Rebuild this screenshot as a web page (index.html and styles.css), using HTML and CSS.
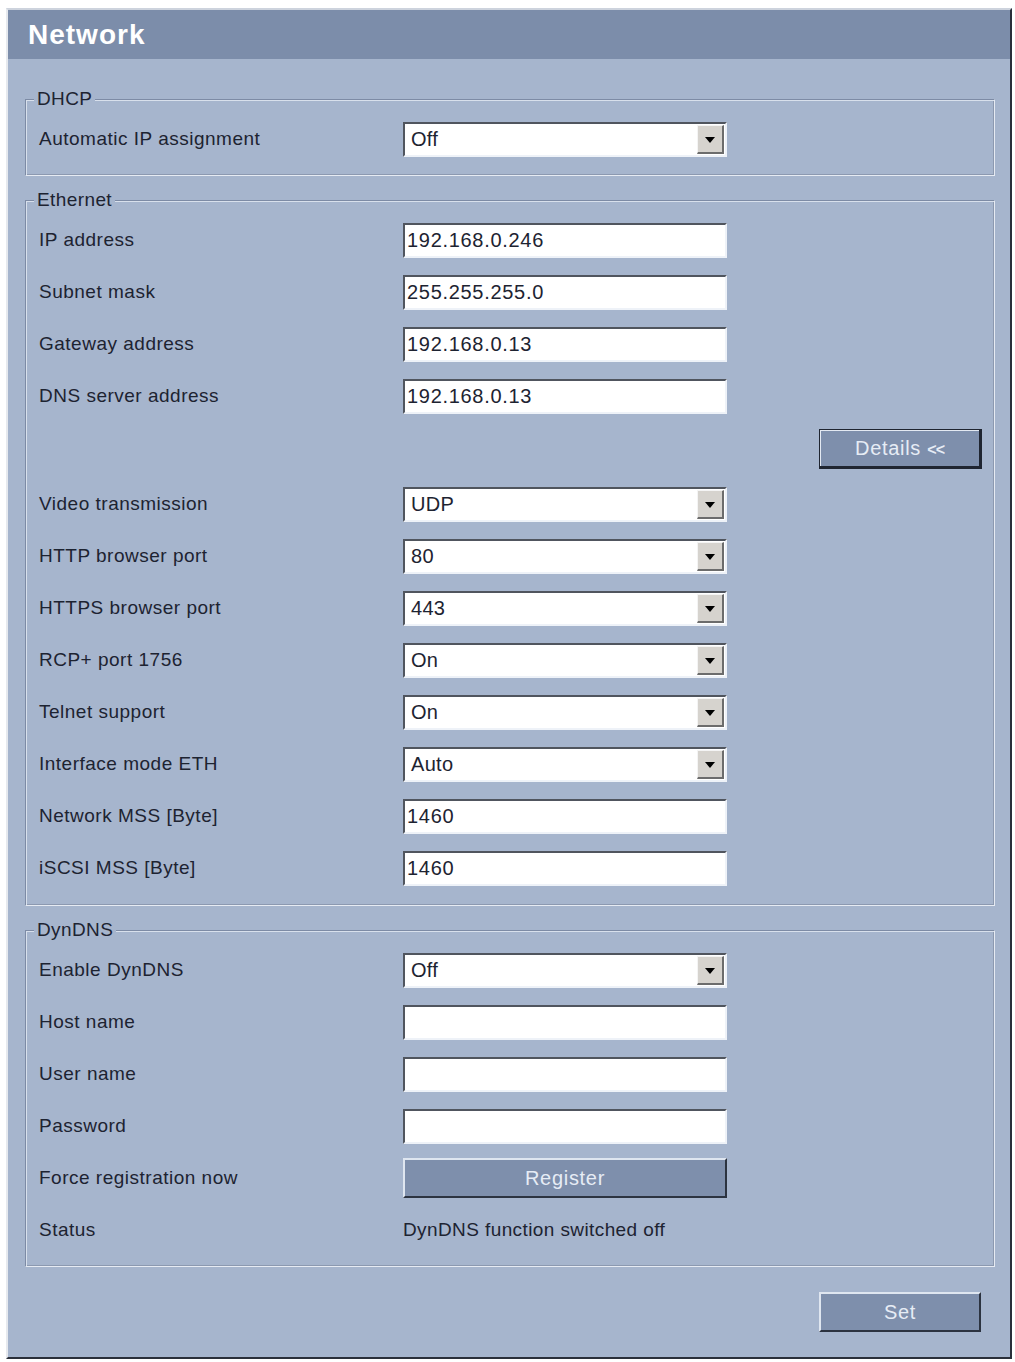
FILE: index.html
```html
<!DOCTYPE html>
<html>
<head>
<meta charset="utf-8">
<title>Network</title>
<link rel="stylesheet" href="styles.css">
</head>
<body>
<div class="panel">
  <div class="header">Network</div>
  <div class="content">
    <fieldset class="group group-dhcp">
      <legend>DHCP</legend>
      <div class="row">
        <span class="label">Automatic IP assignment</span>
        <div class="select"><span class="val">Off</span><span class="arrow"><span class="tri"></span></span></div>
      </div>
    </fieldset>

    <fieldset class="group group-eth">
      <legend>Ethernet</legend>
      <div class="row"><span class="label">IP address</span><input class="field" type="text" value="192.168.0.246"></div>
      <div class="row"><span class="label">Subnet mask</span><input class="field" type="text" value="255.255.255.0"></div>
      <div class="row"><span class="label">Gateway address</span><input class="field" type="text" value="192.168.0.13"></div>
      <div class="row"><span class="label">DNS server address</span><input class="field" type="text" value="192.168.0.13"></div>
      <div class="details-row"><button class="btn btn-details">Details <span class="chev">&lt;&lt;</span></button></div>
      <div class="row"><span class="label">Video transmission</span><div class="select"><span class="val">UDP</span><span class="arrow"><span class="tri"></span></span></div></div>
      <div class="row"><span class="label">HTTP browser port</span><div class="select"><span class="val">80</span><span class="arrow"><span class="tri"></span></span></div></div>
      <div class="row"><span class="label">HTTPS browser port</span><div class="select"><span class="val">443</span><span class="arrow"><span class="tri"></span></span></div></div>
      <div class="row"><span class="label">RCP+ port 1756</span><div class="select"><span class="val">On</span><span class="arrow"><span class="tri"></span></span></div></div>
      <div class="row"><span class="label">Telnet support</span><div class="select"><span class="val">On</span><span class="arrow"><span class="tri"></span></span></div></div>
      <div class="row"><span class="label">Interface mode ETH</span><div class="select"><span class="val">Auto</span><span class="arrow"><span class="tri"></span></span></div></div>
      <div class="row"><span class="label">Network MSS [Byte]</span><input class="field" type="text" value="1460"></div>
      <div class="row"><span class="label">iSCSI MSS [Byte]</span><input class="field" type="text" value="1460"></div>
    </fieldset>

    <fieldset class="group group-dyn">
      <legend>DynDNS</legend>
      <div class="row"><span class="label">Enable DynDNS</span><div class="select"><span class="val">Off</span><span class="arrow"><span class="tri"></span></span></div></div>
      <div class="row"><span class="label">Host name</span><input class="field" type="text" value=""></div>
      <div class="row"><span class="label">User name</span><input class="field" type="text" value=""></div>
      <div class="row"><span class="label">Password</span><input class="field" type="password" value=""></div>
      <div class="row"><span class="label">Force registration now</span><button class="btn btn-register">Register</button></div>
      <div class="row"><span class="label">Status</span><span class="status">DynDNS function switched off</span></div>
    </fieldset>

    <div class="set-row"><button class="btn btn-set">Set</button></div>
  </div>
</div>
</body>
</html>
```

FILE: styles.css
```css
html, body {
  margin: 0;
  padding: 0;
  background: #ffffff;
}

body {
  font-family: "Liberation Sans", Arial, sans-serif;
  color: #1d2331;
}

.panel {
  box-sizing: border-box;
  width: 1006px;
  margin: 8px 0 0 6px;
  background: #a6b5cd;
  border-top: 2px solid #cdd3dd;
  border-left: 2px solid #e6e9ee;
  border-right: 2px solid #2a2f3a;
  border-bottom: 2px solid #2a2f3a;
}

.header {
  height: 49px;
  background: #7c8daa;
  color: #ffffff;
  font-weight: bold;
  font-size: 28px;
  letter-spacing: 1px;
  line-height: 49px;
  padding-left: 20px;
}

.content {
  padding: 29px 15px 25px 17px;
}

.group {
  margin: 0;
  padding: 3px 12px 10px 13px;
  border-top: 1px solid #7d8ba5;
  border-left: 1px solid #7d8ba5;
  border-right: 1px solid #e6ebf3;
  border-bottom: 1px solid #e6ebf3;
  box-shadow: inset 1px 1px 0 #d8e0ec, inset -1px -1px 0 #8c99b0;
}

.group + .group {
  margin-top: 13px;
}

.group-eth {
  padding-bottom: 11px;
}

.group-dyn {
  padding-bottom: 10px;
}

legend {
  font-size: 19px;
  letter-spacing: 0.4px;
  line-height: 22px;
  padding: 0 3px;
  margin-left: -5px;
  background: #a6b5cd;
}

.row {
  display: grid;
  grid-template-columns: 364px 324px;
  align-items: center;
  height: 52px;
}

.label {
  font-size: 19px;
  letter-spacing: 0.5px;
  white-space: nowrap;
}

.status {
  font-size: 19px;
  letter-spacing: 0.4px;
  white-space: nowrap;
}

.field {
  box-sizing: border-box;
  width: 324px;
  height: 35px;
  margin: 0;
  padding: 0 0 0 2px;
  font-family: "Liberation Sans", Arial, sans-serif;
  font-size: 20px;
  letter-spacing: 0.7px;
  color: #1d2331;
  background: #ffffff;
  border-top: 2px solid #50555e;
  border-left: 2px solid #50555e;
  border-right: 2px solid #eef2f8;
  border-bottom: 2px solid #eef2f8;
  outline: none;
}

.select {
  box-sizing: border-box;
  width: 324px;
  height: 35px;
  display: flex;
  align-items: center;
  background: #ffffff;
  border-top: 2px solid #50555e;
  border-left: 2px solid #50555e;
  border-right: 2px solid #eef2f8;
  border-bottom: 2px solid #eef2f8;
  padding: 0 1px 0 6px;
}

.select .val {
  flex: 1;
  font-size: 20px;
  letter-spacing: 0.3px;
}

.arrow {
  box-sizing: border-box;
  width: 27px;
  height: 29px;
  display: flex;
  align-items: center;
  justify-content: center;
  background: #d6d3ce;
  border-top: 1px solid #f4f4f4;
  border-left: 1px solid #f4f4f4;
  border-right: 2px solid #6c6c6c;
  border-bottom: 2px solid #6c6c6c;
}

.tri {
  width: 0;
  height: 0;
  border-left: 5px solid transparent;
  border-right: 5px solid transparent;
  border-top: 6px solid #000000;
  margin-top: 2px;
}

.details-row {
  height: 56px;
  display: flex;
  justify-content: flex-end;
  align-items: flex-start;
  padding-right: 0;
  box-sizing: border-box;
  padding-top: 7px;
}

.btn {
  box-sizing: border-box;
  margin: 0;
  padding: 0;
  height: 40px;
  background: #7e8fac;
  color: #e6ecf5;
  font-family: "Liberation Sans", Arial, sans-serif;
  font-size: 20px;
  letter-spacing: 0.7px;
  cursor: default;
}

.btn-details {
  width: 163px;
  border: 1px solid #1f2531;
  border-right-width: 3px;
  border-bottom-width: 3px;
  box-shadow: inset 1px 1px 0 #e3e9f2;
}

.chev {
  font-weight: bold;
  font-size: 16px;
  letter-spacing: -1px;
}

.btn-register {
  width: 324px;
  border-top: 2px solid #dfe6f0;
  border-left: 2px solid #dfe6f0;
  border-right: 2px solid #2c3340;
  border-bottom: 2px solid #2c3340;
}

.set-row {
  display: flex;
  justify-content: flex-end;
  padding-right: 14px;
  margin-top: 25px;
}

.btn-set {
  width: 162px;
  border-top: 2px solid #dfe6f0;
  border-left: 2px solid #dfe6f0;
  border-right: 2px solid #2c3340;
  border-bottom: 2px solid #2c3340;
}
```
